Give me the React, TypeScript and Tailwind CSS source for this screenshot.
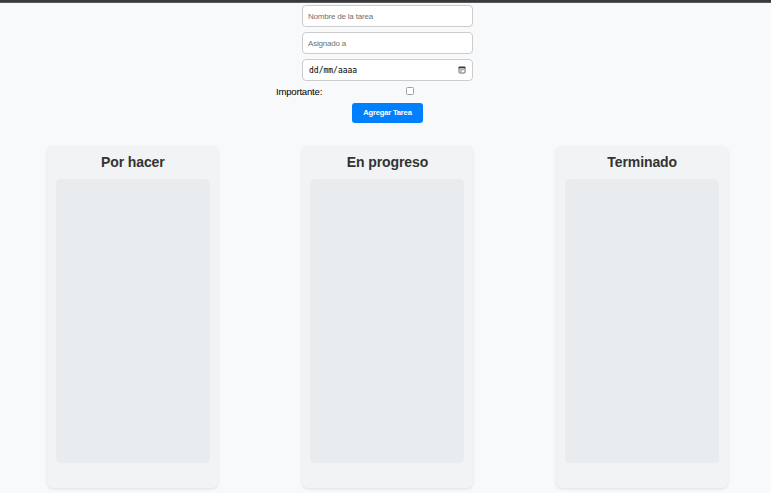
const columns = ['Por hacer', 'En progreso', 'Terminado'];

const fieldClass =
  'block w-[171px] rounded-[4px] border border-[#ccc] bg-white px-[5px] text-[8px] tracking-[-0.2px] leading-[20px] text-black placeholder:text-[#707070] placeholder:opacity-100 outline-none';

function CalendarIcon() {
  return (
    <svg width="8" height="8" viewBox="0 0 8 8" fill="none" aria-hidden="true">
      <rect x="1" y="1" width="6" height="6" rx="0.7" stroke="#555" strokeWidth="0.9" />
      <path d="M0.7 0.8h6.6v1.5H0.7z" fill="#333" />
      <path d="M2 3.7h4" stroke="#777" strokeWidth="0.8" />
      <path d="M2 5.1h2" stroke="#777" strokeWidth="0.8" />
    </svg>
  );
}

function TaskForm() {
  return (
    <form className="flex flex-col items-center pl-[4px]">
      <input className={`${fieldClass} mt-[2px] h-[22px]`} placeholder="Nombre de la tarea" />
      <input className={`${fieldClass} mt-[5px] h-[22px]`} placeholder="Asignado a" />
      <div className="mt-[5px] flex h-[22px] w-[171px] items-center justify-between rounded-[4px] border border-[#ccc] bg-white pl-[6px] pr-[6px]">
        <span className="pt-px font-['DejaVu_Sans_Mono',monospace] text-[8px] leading-[10px] text-black">
          dd/mm/aaaa
        </span>
        <CalendarIcon />
      </div>
      <div className="flex h-[22px] w-[223px] items-start pt-[4px]">
        <label
          htmlFor="important"
          className="w-[130px] text-[9.6px] leading-[13px] tracking-[-0.22px] text-black"
        >
          Importante:
        </label>
        <input
          id="important"
          type="checkbox"
          className="mt-[2px] size-[8px] appearance-none rounded-[1.5px] border border-[#a0a0a0] bg-white"
        />
      </div>
      <button
        type="button"
        className="h-[20px] w-[71px] rounded-[3px] bg-[#0080ff] text-[7.6px] font-bold leading-[20px] tracking-[-0.2px] text-white"
      >
        Agregar Tarea
      </button>
    </form>
  );
}

function Column({ title }: { title: string }) {
  return (
    <section className="h-[341.5px] w-[171.4px] rounded-[6px] bg-[#f1f3f4] px-[8.7px] pt-[8px] shadow-[0_1px_3px_rgba(0,0,0,0.1)]">
      <h2 className="text-center text-[14px] font-bold leading-[17px] tracking-[-0.1px] text-[#333]">
        {title}
      </h2>
      <div className="mt-[8px] h-[284px] rounded-[5px] bg-[#e8ecef]" />
    </section>
  );
}

export default function App() {
  return (
    <div className="h-[493px] w-[771px] overflow-hidden bg-[#f8f9fb] font-['Liberation_Sans',Arial,sans-serif]">
      <div className="h-[3px] border-b border-[#5b5b5d] bg-[#3a393b]" />
      <TaskForm />
      <main className="mt-[23px] flex gap-[83.3px] pl-[47.1px]">
        {columns.map((title) => (
          <Column key={title} title={title} />
        ))}
      </main>
    </div>
  );
}
